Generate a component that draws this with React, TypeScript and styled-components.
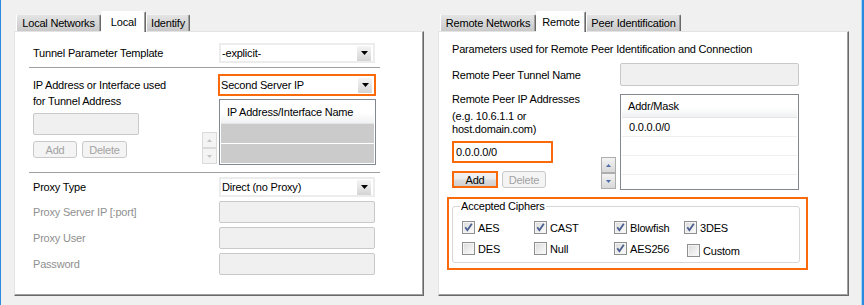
import React from "react";
import styled, { createGlobalStyle } from "styled-components";

const ORANGE = "#fa6a0a";

const GlobalStyle = createGlobalStyle`
  * { box-sizing: border-box; }
  html, body { margin: 0; padding: 0; background: #f0f0f0; }
  body {
    font-family: "Liberation Sans", Arial, sans-serif;
    font-size: 11px;
    letter-spacing: -0.2px;
    color: #000;
  }
`;

const Window = styled.div`
  display: flex;
  gap: 14px;
  width: 864px;
  height: 305px;
  padding-left: 13px;
  background: #f0f0f0;
  border-left: 1px solid #2b8be0;
  border-right: 2px solid #2b8be0;
  box-shadow: inset -1px 0 0 #a8d8f8;
`;

const TabControl = styled.div<{ $width: number }>`
  display: flex;
  flex-direction: column;
  width: ${(p) => p.$width}px;
`;

const TabStrip = styled.div`
  display: flex;
  align-items: flex-end;
  height: 31px;
  padding-left: 2px;
`;

const Tab = styled.div<{ $width: number; $active?: boolean }>`
  position: relative;
  z-index: ${(p) => (p.$active ? 1 : 0)};
  display: flex;
  align-items: center;
  justify-content: center;
  width: ${(p) => p.$width}px;
  height: ${(p) => (p.$active ? 21 : 17)}px;
  margin-bottom: ${(p) => (p.$active ? -1 : 0)}px;
  white-space: nowrap;
  background: ${(p) => (p.$active ? "#fff" : "linear-gradient(#e4e4e4, #c9c9c9)")};
  border-top: 1px solid ${(p) => (p.$active ? "#fff" : "#f2f2f2")};
  border-left: 1px solid #fff;
  border-right: 1px solid #696969;
  box-shadow: inset -1px 0 0 #a0a0a0;
  border-radius: 2px 2px 0 0;
`;

const Panel = styled.div<{ $padTop: number; $padLeft: number }>`
  display: flex;
  flex-direction: column;
  height: 265px;
  padding: ${(p) => p.$padTop}px 0 0 ${(p) => p.$padLeft}px;
  background: #fff;
  border-top: 1px solid #e3e3e3;
  border-left: 1px solid #e3e3e3;
  border-right: 1px solid #696969;
  border-bottom: 1px solid #696969;
  box-shadow: inset -1px -1px 0 #a0a0a0;
`;

const FieldRow = styled.div<{ $indent: number; $label: number; $top?: number }>`
  display: grid;
  grid-template-columns: ${(p) => p.$label}px auto;
  align-items: center;
  margin-top: ${(p) => p.$top ?? 0}px;
  padding-left: ${(p) => p.$indent}px;
`;

const FieldGrid = styled.div<{ $indent: number; $columns: string; $top: number; $rowGap?: number }>`
  display: grid;
  grid-template-columns: ${(p) => p.$columns};
  row-gap: ${(p) => p.$rowGap ?? 0}px;
  align-items: center;
  margin-top: ${(p) => p.$top}px;
  padding-left: ${(p) => p.$indent}px;
`;

const Column = styled.div`
  display: flex;
  flex-direction: column;
  align-self: start;
`;

const Label = styled.div<{ $disabled?: boolean; $lh?: number; $top?: number }>`
  margin-top: ${(p) => p.$top ?? 0}px;
  color: ${(p) => (p.$disabled ? "#8f8f8f" : "#000")};
  line-height: ${(p) => p.$lh ?? 14}px;
  white-space: nowrap;
`;

const Heading = styled.div`
  padding-left: 5px;
  line-height: 14px;
  white-space: nowrap;
`;

const Separator = styled.div<{ $top: number }>`
  width: 351px;
  height: 1px;
  margin-top: ${(p) => p.$top}px;
  background: #a0a0a0;
`;

const ComboBox = styled.div<{ $highlight?: boolean }>`
  display: flex;
  align-items: center;
  width: ${(p) => (p.$highlight ? 158 : 156)}px;
  height: ${(p) => (p.$highlight ? 22 : 20)}px;
  margin: ${(p) => (p.$highlight ? "-1px" : "0")};
  padding: 0 2px 0 1px;
  border: 2px solid ${(p) => (p.$highlight ? ORANGE : "#ececec")};
  background: #fff;
  white-space: nowrap;
`;

const ComboArrow = styled.span`
  display: flex;
  align-items: center;
  justify-content: center;
  width: 14px;
  height: 15px;
  margin-left: auto;
  background: linear-gradient(#f5f5f5, #d4d4d4);
`;

const TextBox = styled.div<{ $width: number; $height?: number; $highlight?: boolean; $top?: number }>`
  display: flex;
  align-items: center;
  width: ${(p) => p.$width}px;
  height: ${(p) => p.$height ?? 22}px;
  margin-top: ${(p) => p.$top ?? 0}px;
  padding-left: 2px;
  border: ${(p) => (p.$highlight ? `2px solid ${ORANGE}` : "1px solid #c9c9c9")};
  border-radius: ${(p) => (p.$highlight ? 0 : 2)}px;
  background: ${(p) => (p.$highlight ? "#fff" : "#f0f0f0")};
`;

const ButtonRow = styled.div<{ $top: number; $gap: number }>`
  display: flex;
  gap: ${(p) => p.$gap}px;
  margin-top: ${(p) => p.$top}px;
`;

const PushButton = styled.div<{ $width: number; $highlight?: boolean; $disabled?: boolean }>`
  display: flex;
  align-items: center;
  justify-content: center;
  width: ${(p) => p.$width}px;
  height: 17px;
  border: ${(p) => (p.$highlight ? `2px solid ${ORANGE}` : "1px solid #c9c9c9")};
  border-radius: ${(p) => (p.$highlight ? 0 : 3)}px;
  background: ${(p) =>
    p.$disabled ? "#f4f4f4" : "linear-gradient(#f2f2f2 0%, #ebebeb 48%, #dcdcdc 52%, #cfcfcf 100%)"};
  color: ${(p) => (p.$disabled ? "#a3a3a3" : "#000")};
`;

const Spin = styled.div`
  display: flex;
  flex-direction: column;
  align-self: end;
  width: 15px;
  margin-bottom: 1px;
`;

const SpinButton = styled.div<{ $enabled?: boolean }>`
  display: flex;
  align-items: center;
  justify-content: center;
  height: 16px;
  border: 1px solid ${(p) => (p.$enabled ? "#adadad" : "#dadada")};
  background: ${(p) => (p.$enabled ? "linear-gradient(#f3f3f3, #d8d8d8)" : "#f4f4f4")};
`;

const ListBox = styled.div<{ $width: number; $height: number; $top?: number }>`
  width: ${(p) => p.$width}px;
  height: ${(p) => p.$height}px;
  margin-top: ${(p) => p.$top ?? 0}px;
  padding: 0 1px;
  border: 1px solid #828790;
  background: #fff;
  overflow: hidden;
`;

const ListHeader = styled.div<{ $height: number }>`
  display: flex;
  align-items: center;
  height: ${(p) => p.$height}px;
  padding-left: 6px;
  background: linear-gradient(#fff 0%, #fff 55%, #f0f1f2 100%);
  border-bottom: 1px solid #e5e5e5;
`;

const ListRow = styled.div<{ $filled?: boolean }>`
  display: flex;
  align-items: center;
  height: ${(p) => (p.$filled ? 20 : 19)}px;
  padding-left: 7px;
  background: ${(p) => (p.$filled ? "#cbcbcb" : "#fff")};
  border-bottom: 1px solid ${(p) => (p.$filled ? "#fff" : "#efefef")};
`;

const HighlightFrame = styled.div`
  width: 361px;
  margin-top: 7px;
  padding: 1px 6px 5px 3px;
  border: 2px solid ${ORANGE};
`;

const GroupBox = styled.fieldset`
  min-width: 0;
  margin: 0;
  padding: 8px 0 5px 9px;
  border: 1px solid #d7d7d7;
  border-radius: 3px;
`;

const GroupLegend = styled.legend`
  margin-left: -2px;
  padding: 0 1px;
  line-height: 13px;
`;

const CheckGrid = styled.div`
  display: grid;
  grid-template-columns: 72px 80px 70px auto;
  row-gap: 8px;
  align-items: start;
`;

const CheckItem = styled.div<{ $nudge?: boolean }>`
  display: flex;
  align-items: center;
  gap: 3px;
  height: 13px;
  margin: ${(p) => (p.$nudge ? "2px 0 0 3px" : "0")};
  white-space: nowrap;
`;

const CheckBox = styled.span`
  display: flex;
  align-items: center;
  justify-content: center;
  width: 13px;
  height: 13px;
  border: 1px solid #8e8f8f;
  background: linear-gradient(135deg, #d9d9d9 0%, #fdfdfd 100%);
  box-shadow: inset 0 0 0 1px #f4f4f4;
`;

function Combo({ value, highlight }: { value: string; highlight?: boolean }) {
  return (
    <ComboBox $highlight={highlight}>
      {value}
      <ComboArrow>
        <svg width="7" height="4" viewBox="0 0 7 4">
          <path d="M0 0h7L3.5 4z" fill="#000" />
        </svg>
      </ComboArrow>
    </ComboBox>
  );
}

function Spinner({ enabled }: { enabled?: boolean }) {
  const color = enabled ? "#4d6ea8" : "#c4c4c4";
  return (
    <Spin>
      <SpinButton $enabled={enabled}>
        <svg width="5" height="3" viewBox="0 0 5 3">
          <path d="M0 3h5L2.5 0z" fill={color} />
        </svg>
      </SpinButton>
      <SpinButton $enabled={enabled}>
        <svg width="5" height="3" viewBox="0 0 5 3">
          <path d="M0 0h5L2.5 3z" fill={color} />
        </svg>
      </SpinButton>
    </Spin>
  );
}

function Check({ label, checked, nudge }: { label: string; checked?: boolean; nudge?: boolean }) {
  return (
    <CheckItem $nudge={nudge}>
      <CheckBox>
        {checked && (
          <svg width="11" height="11" viewBox="0 0 11 11">
            <path d="M2.3 5.3L4.4 8.2L8.8 1.8" fill="none" stroke="#4a5d8f" strokeWidth="1.8" />
          </svg>
        )}
      </CheckBox>
      {label}
    </CheckItem>
  );
}

const ciphers = [
  { label: "AES", checked: true },
  { label: "CAST", checked: true },
  { label: "Blowfish", checked: true },
  { label: "3DES", checked: true },
  { label: "DES" },
  { label: "Null" },
  { label: "AES256", checked: true },
  { label: "Custom", nudge: true },
];

function LocalTab() {
  return (
    <TabControl $width={410}>
      <TabStrip>
        <Tab $width={85}>Local Networks</Tab>
        <Tab $width={45} $active>Local</Tab>
        <Tab $width={44}>Identify</Tab>
      </TabStrip>
      <Panel $padTop={11} $padLeft={14}>
        <FieldRow $indent={4} $label={186}>
          <Label>Tunnel Parameter Template</Label>
          <Combo value="-explicit-" />
        </FieldRow>
        <Separator $top={4} />
        <FieldGrid $indent={4} $top={7} $columns="169px 17px 156px">
          <Column>
            <Label $lh={16} $top={2}>
              IP Address or Interface used
              <br />
              for Tunnel Address
            </Label>
            <TextBox $width={106} $top={4} />
            <ButtonRow $top={6} $gap={5}>
              <PushButton $width={44} $disabled>Add</PushButton>
              <PushButton $width={45} $disabled>Delete</PushButton>
            </ButtonRow>
          </Column>
          <Spinner />
          <Column>
            <Combo value="Second Server IP" highlight />
            <ListBox $width={157} $height={66} $top={4}>
              <ListHeader $height={24}>IP Address/Interface Name</ListHeader>
              <ListRow $filled />
              <ListRow $filled />
            </ListBox>
          </Column>
        </FieldGrid>
        <Separator $top={7} />
        <FieldGrid $indent={4} $top={4} $columns="186px 156px" $rowGap={4}>
          <Label>Proxy Type</Label>
          <Combo value="Direct (no Proxy)" />
          <Label $disabled>Proxy Server IP [:port]</Label>
          <TextBox $width={156} />
          <Label $disabled>Proxy User</Label>
          <TextBox $width={156} />
          <Label $disabled>Password</Label>
          <TextBox $width={156} />
        </FieldGrid>
      </Panel>
    </TabControl>
  );
}

function RemoteTab() {
  return (
    <TabControl $width={411}>
      <TabStrip>
        <Tab $width={96}>Remote Networks</Tab>
        <Tab $width={50} $active>Remote</Tab>
        <Tab $width={95}>Peer Identification</Tab>
      </TabStrip>
      <Panel $padTop={10} $padLeft={8}>
        <Heading>Parameters used for Remote Peer Identification and Connection</Heading>
        <FieldRow $indent={5} $label={168} $top={7}>
          <Label>Remote Peer Tunnel Name</Label>
          <TextBox $width={179} $height={23} />
        </FieldRow>
        <FieldGrid $indent={5} $top={8} $columns="149px 19px 179px">
          <Column>
            <Label $lh={10}>Remote Peer IP Addresses</Label>
            <Label $lh={13} $top={6}>
              (e.g. 10.6.1.1 or
              <br />
              host.domain.com)
            </Label>
            <TextBox $width={101} $top={5} $highlight>0.0.0.0/0</TextBox>
            <ButtonRow $top={8} $gap={4}>
              <PushButton $width={46} $highlight>Add</PushButton>
              <PushButton $width={44} $disabled>Delete</PushButton>
            </ButtonRow>
          </Column>
          <Spinner enabled />
          <ListBox $width={179} $height={96}>
            <ListHeader $height={23}>Addr/Mask</ListHeader>
            <ListRow>0.0.0.0/0</ListRow>
            <ListRow />
            <ListRow />
            <ListRow />
          </ListBox>
        </FieldGrid>
        <HighlightFrame>
          <GroupBox>
            <GroupLegend>Accepted Ciphers</GroupLegend>
            <CheckGrid>
              {ciphers.map((c) => (
                <Check key={c.label} label={c.label} checked={c.checked} nudge={c.nudge} />
              ))}
            </CheckGrid>
          </GroupBox>
        </HighlightFrame>
      </Panel>
    </TabControl>
  );
}

export default function App() {
  return (
    <>
      <GlobalStyle />
      <Window>
        <LocalTab />
        <RemoteTab />
      </Window>
    </>
  );
}
